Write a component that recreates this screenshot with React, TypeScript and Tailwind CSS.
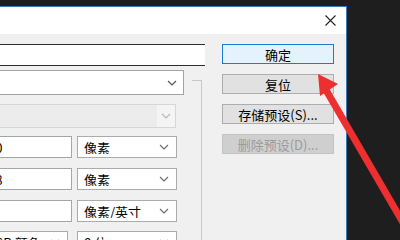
const Chevron = ({ color = "#6b6b6b" }: { color?: string }) => (
  <svg width="10" height="6" viewBox="0 0 10 6" className="shrink-0">
    <polyline points="1,1 5,5 9,1" fill="none" stroke={color} strokeWidth="1.2" />
  </svg>
);

const Select = ({ label, w, chevron = "#6b6b6b" }: { label: string; w: string; chevron?: string }) => (
  <div className={`${w} h-[22px] flex items-center justify-between pl-[6px] pr-[7px] bg-white border border-[#ababab]`}>
    <span className="truncate">{label}</span>
    <Chevron color={chevron} />
  </div>
);

const TextBox = ({ value }: { value: string }) => (
  <div className="w-[92px] h-[22px] flex items-center pl-[7px] bg-white border border-[#a5a5a5]">{value}</div>
);

const Btn = ({ label, kind = "normal" }: { label: string; kind?: "default" | "normal" | "disabled" }) => {
  const cls =
    kind === "default"
      ? "bg-[#e5f1fb] border-[#1a7bd4] text-black"
      : kind === "disabled"
      ? "bg-[#cfcfcf] border-[#c2c2c2] text-[#9b9b9b]"
      : "bg-[#e1e1e1] border-[#adadad] text-black";
  return <div className={`w-[112px] h-[20px] flex items-center justify-center border ${cls}`}>{label}</div>;
};

export default function App() {
  return (
    <div
      className="relative w-[400px] h-[240px] overflow-hidden bg-[#1e1e1e] text-[13px] leading-none"
      style={{ fontFamily: '"Noto Sans CJK SC", "Noto Sans", sans-serif' }}
    >
      <div className="mt-[6px] w-[347px] h-[234px] flex flex-col border-t border-r border-[#3a78b8] overflow-hidden">
        {/* title bar */}
        <div className="h-[27px] bg-white flex items-center justify-end pr-[10px] shrink-0">
          <svg width="11" height="11" viewBox="0 0 11 11">
            <path d="M0.5 0.5 L10.5 10.5 M10.5 0.5 L0.5 10.5" stroke="#222" strokeWidth="1.1" />
          </svg>
        </div>
        {/* body */}
        <div className="flex-1 bg-[#f0f0f0] flex pt-[10px]">
          <div className="-ml-[20px] w-[225px] flex flex-col">
            <div className="w-[225px] h-[22px] bg-white border-y border-[#2e2e2e]" />
            <div className="relative mt-[4px] flex flex-col">
              <div className="absolute left-[212px] top-[10px] w-[10px] h-[200px] border-t border-r border-[#c8c8c8]" />
              <div className="w-[204px] h-[25px] flex items-center justify-end pr-[6px] bg-white border border-[#a3a3a3]">
                <Chevron color="#555" />
              </div>
              <div className="mt-[9px] w-[196px] h-[24px] flex border border-[#d6d6d6] bg-[#ececec]">
                <div className="flex-1" />
                <div className="w-[18px] flex items-center justify-center bg-[#f4f4f4]">
                  <Chevron color="#b8b8b8" />
                </div>
              </div>
              <div className="mt-[8px] flex flex-col gap-[10px]">
                <div className="flex gap-[5px]">
                  <TextBox value="60" />
                  <Select label="像素" w="w-[100px]" />
                </div>
                <div className="flex gap-[5px]">
                  <TextBox value="48" />
                  <Select label="像素" w="w-[100px]" />
                </div>
                <div className="flex gap-[5px]">
                  <TextBox value="" />
                  <Select label="像素/英寸" w="w-[100px]" />
                </div>
                <div className="flex gap-[9px] -mt-[1px]">
                  <div className="w-[88px] h-[22px] flex items-center justify-between pl-[5px] pr-[7px] bg-white border border-[#ababab] whitespace-nowrap">
                    <span>RGB 颜色</span>
                    <Chevron />
                  </div>
                  <Select label="8 位" w="w-[100px]" />
                </div>
              </div>
            </div>
          </div>
          <div className="ml-[17px] flex flex-col gap-[10px]">
            <Btn label="确定" kind="default" />
            <Btn label="复位" />
            <Btn label="存储预设(S)..." />
            <Btn label="删除预设(D)..." kind="disabled" />
          </div>
        </div>
      </div>
      {/* red annotation arrow */}
      <svg className="absolute inset-0 pointer-events-none" width="400" height="240" viewBox="0 0 400 240">
        <line x1="405" y1="226" x2="326" y2="90" stroke="#ee2f2f" strokeWidth="7" strokeLinecap="butt" />
        <polygon points="318,74 338,84 320,96" fill="#ee2f2f" />
      </svg>
    </div>
  );
}
